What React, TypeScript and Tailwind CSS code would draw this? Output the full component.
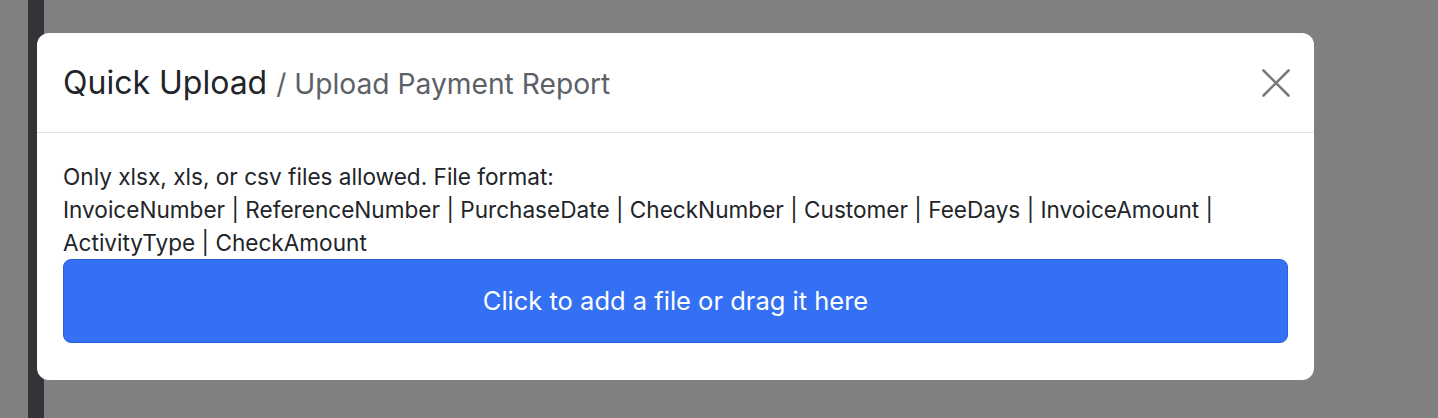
const columns = [
  "InvoiceNumber",
  "ReferenceNumber",
  "PurchaseDate",
  "CheckNumber",
  "Customer",
  "FeeDays",
  "InvoiceAmount",
  "ActivityType",
  "CheckAmount",
];

export default function App() {
  return (
    <div
      className="relative flex h-[418px] w-full overflow-hidden bg-[#808080]"
      style={{ fontFamily: "Inter, 'Noto Sans', sans-serif" }}
    >
      {/* page behind the backdrop */}
      <div className="w-[28px] shrink-0" />
      <div className="w-[16px] shrink-0 bg-[#343438]" />

      {/* Modal */}
      <div className="absolute left-[37px] top-[33px] w-[1277px] rounded-xl bg-white">
        <div className="flex h-[100px] items-center justify-between border-b border-[#dee2e6] pl-[26px] pr-[24px]">
          <h2 className="text-[32px] leading-none text-[#212529]">
            Quick Upload{" "}
            <span className="text-[28.2px] text-[#5c6168]">/ Upload Payment Report</span>
          </h2>
          <button aria-label="Close" className="text-[#7a7a7a]">
            <svg width="28" height="28" viewBox="0 0 28 28" fill="none" stroke="currentColor" strokeWidth="2.6" strokeLinecap="round">
              <path d="M1.5 1.5l25 25M26.5 1.5l-25 25" />
            </svg>
          </button>
        </div>

        <div className="px-[26px] pb-[37px] pt-[27px]">
          <p className="text-[22.6px] leading-[33px] text-[#212529]">
            Only xlsx, xls, or csv files allowed. File format:
            <br />
            {columns.join(" | ")}
          </p>
          <button className="flex h-[84px] w-full items-center justify-center rounded-lg border border-[#2b62dc] bg-[#3370f4] text-[25.5px] text-white">
            Click to add a file or drag it here
          </button>
        </div>
      </div>
    </div>
  );
}
